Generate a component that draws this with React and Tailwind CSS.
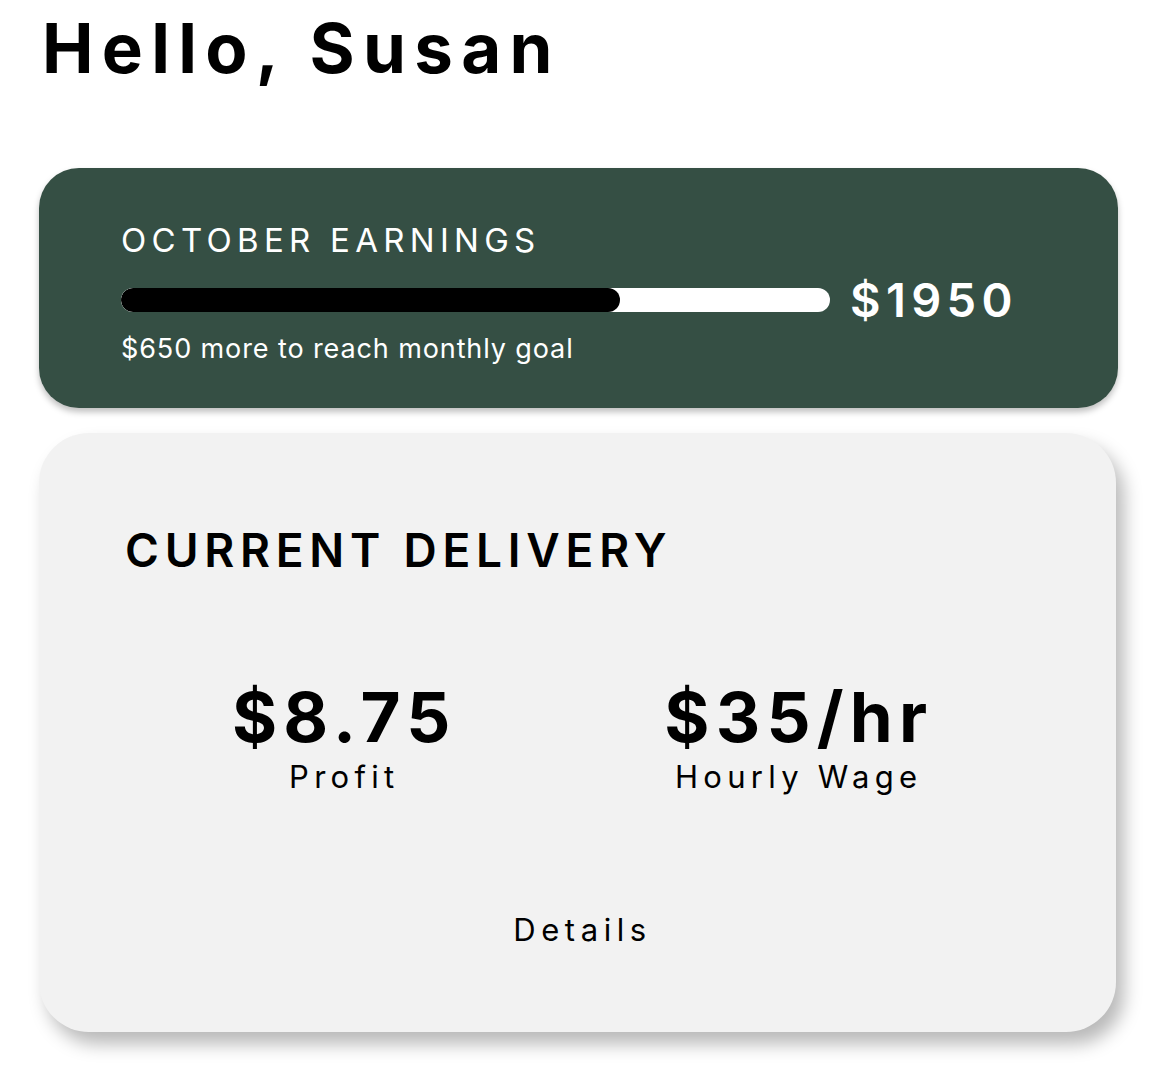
import React from 'react';

const font = { fontFamily: 'Inter, "Noto Sans", sans-serif' };

const Stat = ({ value, label }) => (
  <div className="flex flex-col items-center">
    <div className="text-[69px] leading-[72px] font-bold tracking-[0.09em] text-black">{value}</div>
    <div className="mt-[6px] text-[31px] leading-[36px] tracking-[0.17em] text-black">{label}</div>
  </div>
);

const App = () => {
  const goal = 2600;
  const earned = 1950;
  const pct = 70.4;

  return (
    <div className="w-[1158px] h-[1074px] bg-white" style={font}>
      <div className="pl-[39px] pr-[40px] pt-[12px]">
        <h1 className="pl-[3px] text-[69px] leading-[72px] font-bold tracking-[0.12em] text-black">
          Hello, Susan
        </h1>

        <div className="mt-[84px] h-[240px] rounded-[40px] bg-[#354f44] shadow-[0_4px_6px_rgba(0,0,0,0.25)] pl-[82px] pr-[100px] pt-[52px]">
          <div className="text-[33px] leading-[40px] text-white tracking-[0.16em]">OCTOBER EARNINGS</div>
          <div className="mt-[16px] flex items-center gap-[20px]">
            <div className="w-[710px] h-[24px] rounded-full bg-white overflow-hidden">
              <div className="h-full rounded-full bg-black" style={{ width: `${pct}%` }} />
            </div>
            <div className="text-[47px] leading-[48px] font-semibold tracking-[0.115em] text-white">${earned}</div>
          </div>
          <div className="mt-[7px] text-[27px] leading-[36px] tracking-[0.033em] text-white">
            ${goal - earned} more to reach monthly goal
          </div>
        </div>

        <div className="mt-[25px] h-[599px] w-[1077px] rounded-[50px] bg-[#f2f2f2] shadow-[8px_12px_18px_rgba(0,0,0,0.28)] pt-[89px] pl-[86px] pr-[90px]">
          <div className="text-[46px] leading-[56px] font-semibold tracking-[0.125em] text-black">CURRENT DELIVERY</div>
          <div className="mt-[103px] -ml-[8px] grid grid-cols-2">
            <Stat value="$8.75" label="Profit" />
            <Stat value="$35/hr" label="Hourly Wage" />
          </div>
          <div className="mt-[115px] pl-[14px] text-center">
            <button className="text-[31px] leading-[40px] tracking-[0.18em] text-black">Details</button>
          </div>
        </div>
      </div>
    </div>
  );
};

export default App;
